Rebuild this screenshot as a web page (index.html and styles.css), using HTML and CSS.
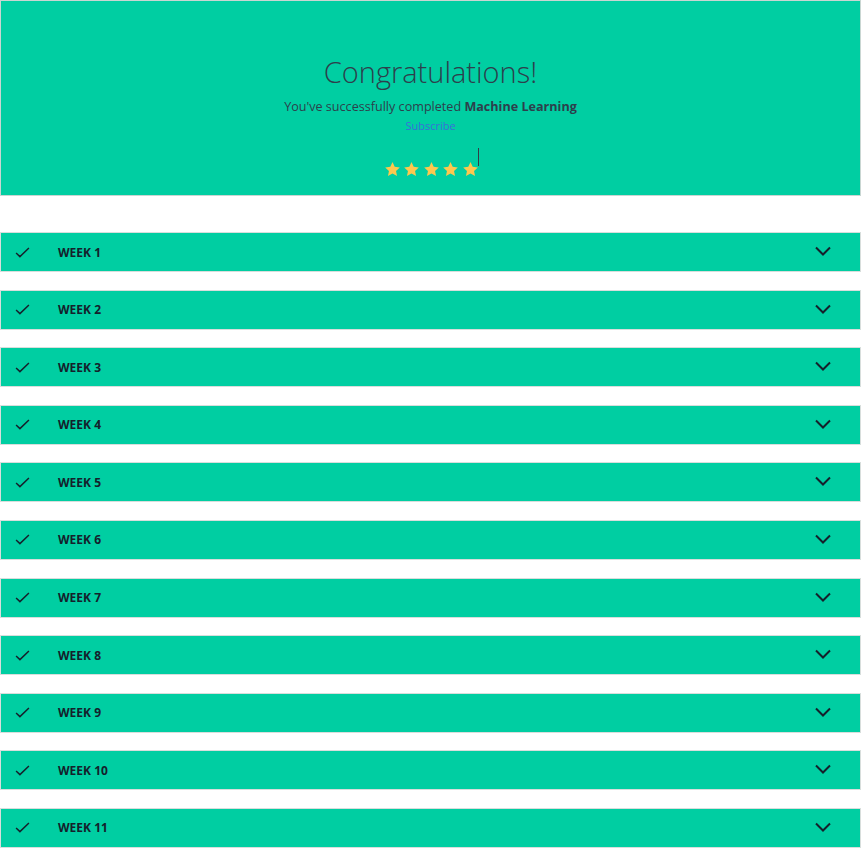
FILE: index.html
```html
<!DOCTYPE html>
<html lang="en">
<head>
<meta charset="utf-8">
<title>Congratulations</title>
<link rel="stylesheet" href="styles.css">
</head>
<body>
<header class="hero">
  <h1 class="hero-title">Congratulations!</h1>
  <p class="hero-sub">You've successfully completed <strong>Machine Learning</strong></p>
  <a class="hero-link" href="#">Subscribe</a>
  <div class="stars">
    <svg class="star" viewBox="0 0 24 24"><path d="M12 1.5l3.1 6.6 7.2.9-5.3 5 1.4 7.1L12 17.6l-6.4 3.5L7 14l-5.3-5 7.2-.9z"/></svg>
    <svg class="star" viewBox="0 0 24 24"><path d="M12 1.5l3.1 6.6 7.2.9-5.3 5 1.4 7.1L12 17.6l-6.4 3.5L7 14l-5.3-5 7.2-.9z"/></svg>
    <svg class="star" viewBox="0 0 24 24"><path d="M12 1.5l3.1 6.6 7.2.9-5.3 5 1.4 7.1L12 17.6l-6.4 3.5L7 14l-5.3-5 7.2-.9z"/></svg>
    <svg class="star" viewBox="0 0 24 24"><path d="M12 1.5l3.1 6.6 7.2.9-5.3 5 1.4 7.1L12 17.6l-6.4 3.5L7 14l-5.3-5 7.2-.9z"/></svg>
    <svg class="star" viewBox="0 0 24 24"><path d="M12 1.5l3.1 6.6 7.2.9-5.3 5 1.4 7.1L12 17.6l-6.4 3.5L7 14l-5.3-5 7.2-.9z"/></svg>
    <span class="caret"></span>
  </div>
</header>

<main class="weeks">
  <div class="week"><svg class="check" viewBox="0 0 16 12"><path d="M1 6.5l4.2 4L15 1"/></svg><span class="week-label">WEEK 1</span><svg class="chev" viewBox="0 0 16 10"><path d="M1 1.5l7 7 7-7"/></svg></div>
  <div class="week"><svg class="check" viewBox="0 0 16 12"><path d="M1 6.5l4.2 4L15 1"/></svg><span class="week-label">WEEK 2</span><svg class="chev" viewBox="0 0 16 10"><path d="M1 1.5l7 7 7-7"/></svg></div>
  <div class="week"><svg class="check" viewBox="0 0 16 12"><path d="M1 6.5l4.2 4L15 1"/></svg><span class="week-label">WEEK 3</span><svg class="chev" viewBox="0 0 16 10"><path d="M1 1.5l7 7 7-7"/></svg></div>
  <div class="week"><svg class="check" viewBox="0 0 16 12"><path d="M1 6.5l4.2 4L15 1"/></svg><span class="week-label">WEEK 4</span><svg class="chev" viewBox="0 0 16 10"><path d="M1 1.5l7 7 7-7"/></svg></div>
  <div class="week"><svg class="check" viewBox="0 0 16 12"><path d="M1 6.5l4.2 4L15 1"/></svg><span class="week-label">WEEK 5</span><svg class="chev" viewBox="0 0 16 10"><path d="M1 1.5l7 7 7-7"/></svg></div>
  <div class="week"><svg class="check" viewBox="0 0 16 12"><path d="M1 6.5l4.2 4L15 1"/></svg><span class="week-label">WEEK 6</span><svg class="chev" viewBox="0 0 16 10"><path d="M1 1.5l7 7 7-7"/></svg></div>
  <div class="week"><svg class="check" viewBox="0 0 16 12"><path d="M1 6.5l4.2 4L15 1"/></svg><span class="week-label">WEEK 7</span><svg class="chev" viewBox="0 0 16 10"><path d="M1 1.5l7 7 7-7"/></svg></div>
  <div class="week"><svg class="check" viewBox="0 0 16 12"><path d="M1 6.5l4.2 4L15 1"/></svg><span class="week-label">WEEK 8</span><svg class="chev" viewBox="0 0 16 10"><path d="M1 1.5l7 7 7-7"/></svg></div>
  <div class="week"><svg class="check" viewBox="0 0 16 12"><path d="M1 6.5l4.2 4L15 1"/></svg><span class="week-label">WEEK 9</span><svg class="chev" viewBox="0 0 16 10"><path d="M1 1.5l7 7 7-7"/></svg></div>
  <div class="week"><svg class="check" viewBox="0 0 16 12"><path d="M1 6.5l4.2 4L15 1"/></svg><span class="week-label">WEEK 10</span><svg class="chev" viewBox="0 0 16 10"><path d="M1 1.5l7 7 7-7"/></svg></div>
  <div class="week"><svg class="check" viewBox="0 0 16 12"><path d="M1 6.5l4.2 4L15 1"/></svg><span class="week-label">WEEK 11</span><svg class="chev" viewBox="0 0 16 10"><path d="M1 1.5l7 7 7-7"/></svg></div>
</main>
</body>
</html>
```

FILE: styles.css
```css
* { box-sizing: border-box; }

html, body {
  margin: 0;
  padding: 0;
  background: #ffffff;
  font-family: "Open Sans", "Noto Sans", sans-serif;
  color: #2b3a48;
}

.hero {
  width: 861px;
  height: 196px;
  background: #00cea2;
  border: 1px solid #c9d6d2;
  display: flex;
  flex-direction: column;
  align-items: center;
  padding-top: 53px;
}

.hero-title {
  margin: 0;
  font-size: 29px;
  font-weight: 300;
  line-height: 36px;
  color: #2d3f4c;
}

.hero-sub {
  margin: 8px 0 0;
  font-size: 12.6px;
  line-height: 18px;
  color: #2d3f4c;
}

.hero-sub strong {
  font-weight: 700;
}

.hero-link {
  margin-top: 2px;
  font-size: 11px;
  line-height: 15px;
  color: #3a6fd8;
  text-decoration: none;
}

.stars {
  display: flex;
  align-items: flex-end;
  gap: 2.5px;
  margin-top: 15px;
  margin-left: 2px;
}

.star {
  width: 17px;
  height: 17px;
  fill: #fdc84f;
}

.caret {
  width: 1px;
  height: 18px;
  background: #333c44;
  margin-left: -3px;
  margin-bottom: 12px;
}

.weeks {
  margin-top: 36px;
  width: 861px;
}

.week {
  height: 40px;
  margin-bottom: 17.6px;
  background: #00cea2;
  border: 1px solid #d8dedc;
  display: flex;
  align-items: center;
  padding-left: 14px;
  padding-right: 29px;
}

.check {
  width: 15px;
  height: 11px;
  fill: none;
  stroke: #15202b;
  stroke-width: 1.6;
}

.week-label {
  margin-left: 28px;
  font-size: 12px;
  font-weight: 700;
  color: #15202b;
  flex: 1;
}

.chev {
  width: 16px;
  height: 10px;
  fill: none;
  stroke: #15202b;
  stroke-width: 2;
  margin-top: -2px;
}
```
